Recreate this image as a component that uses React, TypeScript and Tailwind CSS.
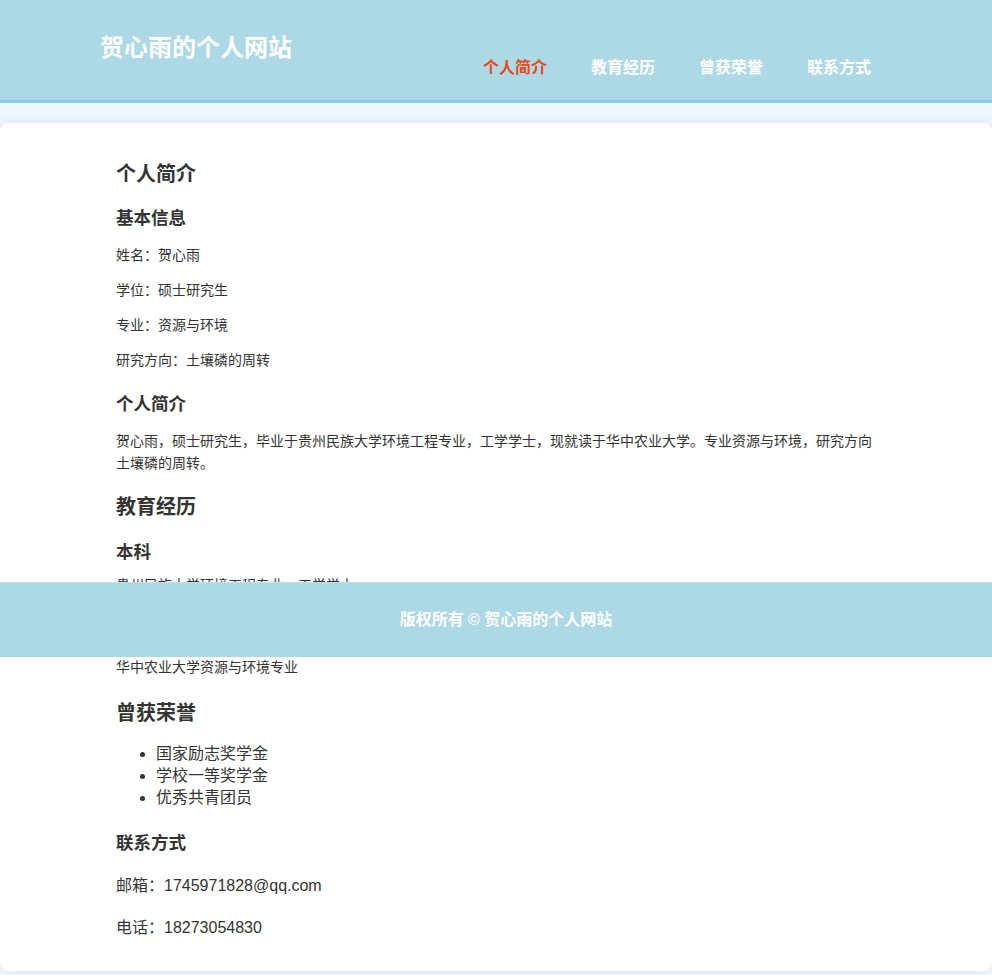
import React from 'react';

const FONT = { fontFamily: '"Liberation Sans", "Noto Sans CJK SC", Arial, sans-serif' };

const NAV = ['个人简介', '教育经历', '曾获荣誉', '联系方式'];

function Header() {
  return (
    <header className="h-[103px] bg-[#add8e6] border-b-[3px] border-[#87ceeb]">
      <div className="w-[800px] mx-auto flex justify-between items-start">
        <h1 className="mt-[32px] pl-1 text-[24px] leading-[32px] font-bold text-white">
          贺心雨的个人网站
        </h1>
        <nav className="mt-[56px] mr-[3px] flex">
          {NAV.map((item, i) => (
            <a
              key={item}
              href="#"
              className={`px-[22px] text-[16px] leading-[24px] font-bold ${
                i === 0 ? 'text-[#e64a19]' : 'text-white'
              }`}
            >
              {item}
            </a>
          ))}
        </nav>
      </div>
    </header>
  );
}

export default function App() {
  return (
    <div className="relative min-h-screen bg-[#f0f8ff] pb-[5px] text-[#333]" style={FONT}>
      <Header />

      <main className="mt-[20px] bg-white rounded-lg shadow-[0_0_10px_rgba(0,0,0,0.1)] pt-[35px] pb-[30px]">
        <div className="w-[760px] mx-auto flex flex-col">
          {/* 个人简介 */}
          <h2 className="text-[20px] leading-[32px] font-bold">个人简介</h2>
          <h3 className="mt-[14px] text-[17.5px] leading-[28px] font-bold">基本信息</h3>
          <p className="mt-[12px] text-[14px] leading-[22px]">姓名：贺心雨</p>
          <p className="mt-[13px] text-[14px] leading-[22px]">学位：硕士研究生</p>
          <p className="mt-[13px] text-[14px] leading-[22px]">专业：资源与环境</p>
          <p className="mt-[13px] text-[14px] leading-[22px]">研究方向：土壤磷的周转</p>
          <h3 className="mt-[19px] text-[17.5px] leading-[28px] font-bold">个人简介</h3>
          <p className="mt-[12px] text-[14px] leading-[22px]">
            贺心雨，硕士研究生，毕业于贵州民族大学环境工程专业，工学学士，现就读于华中农业大学。专业资源与环境，研究方向土壤磷的周转。
          </p>

          {/* 教育经历 */}
          <h2 className="mt-[17px] text-[20px] leading-[32px] font-bold">教育经历</h2>
          <h3 className="mt-[15px] text-[17.5px] leading-[28px] font-bold">本科</h3>
          <p className="mt-[8px] text-[14px] leading-[22px]">贵州民族大学环境工程专业，工学学士</p>
          <h3 className="mt-[22px] text-[17.5px] leading-[28px] font-bold">研究生</h3>
          <p className="mt-[10px] text-[14px] leading-[22px]">华中农业大学资源与环境专业</p>

          {/* 曾获荣誉 */}
          <h2 className="mt-[19px] text-[20px] leading-[32px] font-bold">曾获荣誉</h2>
          <ul className="mt-[14px] pl-[40px] list-disc text-[16px] leading-[22px]">
            <li>国家励志奖学金</li>
            <li>学校一等奖学金</li>
            <li>优秀共青团员</li>
          </ul>

          {/* 联系方式 */}
          <h3 className="mt-[20px] text-[17.5px] leading-[28px] font-bold">联系方式</h3>
          <p className="mt-[16px] text-[16px] leading-[26px]">邮箱：1745971828@qq.com</p>
          <p className="mt-[16px] text-[16px] leading-[26px]">电话：18273054830</p>
        </div>
      </main>

      <footer className="absolute top-[582px] left-0 right-0 h-[75px] bg-[#add8e6] border-t border-[#c4dfe8] flex items-center justify-center pl-[20px]">
        <span className="text-[16px] font-bold text-white">版权所有 © 贺心雨的个人网站</span>
      </footer>
    </div>
  );
}
